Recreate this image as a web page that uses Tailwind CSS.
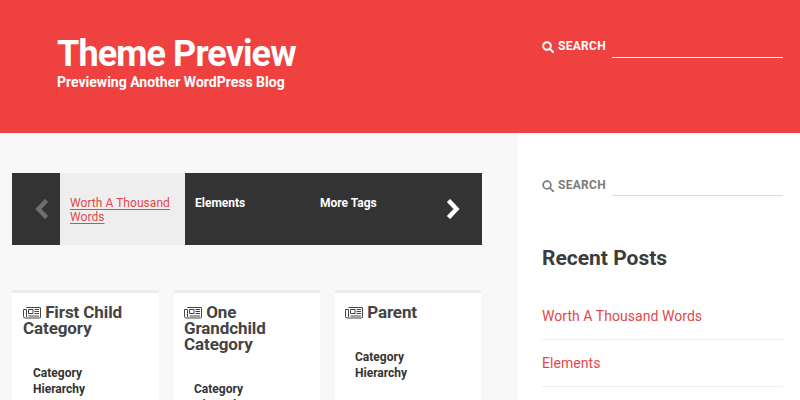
<!DOCTYPE html>
<html>
<head>
<meta charset="utf-8">
<script src="https://cdn.jsdelivr.net/npm/@tailwindcss/browser@4"></script>
</head>
<body class="w-[800px] h-[400px] overflow-hidden bg-white font-['Roboto',sans-serif] text-[#333]">
<header class="h-[133px] bg-[#ef4240] flex text-white">
  <div class="w-[518px] shrink-0 pl-[57px] pt-[35px]">
    <h1 class="text-[36px] leading-[39px] font-bold tracking-[-0.9px]">Theme Preview</h1>
    <p class="text-[14px] leading-[17px] font-bold">Previewing Another WordPress Blog</p>
  </div>
  <div class="w-[258px] shrink-0 ml-[24px] pt-[34px] flex items-start">
    <svg class="mt-[7px]" width="12" height="12" viewBox="0 0 12 12" fill="none" stroke="#fff" stroke-width="2"><circle cx="5" cy="5" r="3.800"/><path d="M8 8l3.300 3.300" stroke-linecap="round"/></svg>
    <span class="text-[12px] leading-[24px] font-bold ml-[4px] w-[54px] tracking-[0.3px]">SEARCH</span>
    <span class="block w-[171px] h-[24px] border-b border-white"></span>
  </div>
</header>
<div class="flex h-[267px]">
  <main class="w-[518px] bg-[#f8f8f8] pl-[12px] pr-[36px] pt-[40px]">
    <nav class="h-[72px] bg-[#333] flex text-white text-[12px] leading-[15px] font-bold">
      <div class="w-[48px] flex items-center justify-center pl-[11px]">
        <svg width="14" height="20" viewBox="0 0 14 20" fill="none" stroke="#6e6e6e" stroke-width="4.500"><path d="M11.500 1.500L3.500 10l8 8.500"/></svg>
      </div>
      <div class="w-[125px] bg-[#eeeeee] pl-[10px] pt-[23px] pr-[10px] font-normal leading-[14px] text-[#e2484a] tracking-[0.05px]">
        <span class="underline decoration-1 underline-offset-[2px]">Worth A Thousand Words</span>
      </div>
      <div class="w-[125px] pl-[10px] pt-[23px]">Elements</div>
      <div class="w-[125px] pl-[10px] pt-[23px]">More Tags</div>
      <div class="w-[47px] flex items-center justify-center pr-[11px]">
        <svg width="14" height="20" viewBox="0 0 14 20" fill="none" stroke="#fff" stroke-width="4.500"><path d="M2.500 1.500L10.500 10l-8 8.500"/></svg>
      </div>
    </nav>
    <div class="grid grid-cols-[147px_146px_146px] gap-x-[15px] mt-[45px]">
      <article class="h-[200px] bg-white border-t-[3px] border-[#ececec] pl-[11px] pr-[8px] pt-[11px]">
        <h2 class="text-[17px] leading-[16px] font-bold text-[#444] tracking-[-0.1px]">
          <svg class="inline-block align-[-1px]" width="18" height="13" viewBox="0 0 18 13" fill="none" stroke="#444" stroke-width="1"><path d="M3.500 1.500h13.500a.5.5 0 0 1 .5.5v9a1 1 0 0 1-1 1H2a1.500 1.500 0 0 1-1.500-1.500V3.500h3m0 0v7.500"/><path d="M5.500 3.500h4.500v4h-4.500zM11.500 3.500h4.500M11.500 5.500h4.500M11.500 7.500h4.500M5.500 10h10.500"/></svg>
          First Child Category
        </h2>
        <p class="text-[12px] leading-[16px] font-bold mt-[29px] ml-[10px] w-[70px]">Category Hierarchy</p>
      </article>
      <article class="h-[200px] bg-white border-t-[3px] border-[#ececec] pl-[10px] pr-[8px] pt-[11px]">
        <h2 class="text-[17px] leading-[16px] font-bold text-[#444] tracking-[-0.1px]">
          <svg class="inline-block align-[-1px]" width="18" height="13" viewBox="0 0 18 13" fill="none" stroke="#444" stroke-width="1"><path d="M3.500 1.500h13.500a.5.5 0 0 1 .5.5v9a1 1 0 0 1-1 1H2a1.500 1.500 0 0 1-1.500-1.500V3.500h3m0 0v7.500"/><path d="M5.500 3.500h4.500v4h-4.500zM11.500 3.500h4.500M11.500 5.500h4.500M11.500 7.500h4.500M5.500 10h10.500"/></svg>
          One Grandchild Category
        </h2>
        <p class="text-[12px] leading-[16px] font-bold mt-[29px] ml-[10px] w-[70px]">Category Hierarchy</p>
      </article>
      <article class="h-[200px] bg-white border-t-[3px] border-[#ececec] pl-[10px] pr-[8px] pt-[11px]">
        <h2 class="text-[17px] leading-[16px] font-bold text-[#444] tracking-[-0.1px]">
          <svg class="inline-block align-[-1px]" width="18" height="13" viewBox="0 0 18 13" fill="none" stroke="#444" stroke-width="1"><path d="M3.500 1.500h13.500a.5.5 0 0 1 .5.5v9a1 1 0 0 1-1 1H2a1.500 1.500 0 0 1-1.500-1.500V3.500h3m0 0v7.500"/><path d="M5.500 3.500h4.500v4h-4.500zM11.500 3.500h4.500M11.500 5.500h4.500M11.500 7.500h4.500M5.500 10h10.500"/></svg>
          Parent
        </h2>
        <p class="text-[12px] leading-[16px] font-bold mt-[29px] ml-[10px] w-[70px]">Category Hierarchy</p>
      </article>
    </div>
  </main>
  <aside class="w-[282px] pl-[24px] pr-[17px] pt-[40px]">
    <div class="flex items-start">
      <svg class="mt-[7px]" width="12" height="12" viewBox="0 0 12 12" fill="none" stroke="#7c7c7c" stroke-width="1.700"><circle cx="5" cy="5" r="3.900"/><path d="M8 8l3.300 3.300" stroke-linecap="round"/></svg>
      <span class="text-[12px] leading-[24px] font-bold ml-[4px] w-[54px] text-[#7c7c7c] tracking-[0.3px]">SEARCH</span>
      <span class="block w-[171px] h-[23px] border-b border-[#dcdcdc]"></span>
    </div>
    <h3 class="text-[21px] leading-[24px] font-bold mt-[49px] text-[#3c3c3c]">Recent Posts</h3>
    <ul class="mt-[22px] text-[14px] leading-[20px] text-[#e2484a] tracking-[0.05px]">
      <li class="pt-[14px] h-[48px] border-b border-[#eeeeee]">Worth A Thousand Words</li>
      <li class="pt-[13px] h-[47px] border-b border-[#eeeeee]">Elements</li>
    </ul>
  </aside>
</div>
</body>
</html>
